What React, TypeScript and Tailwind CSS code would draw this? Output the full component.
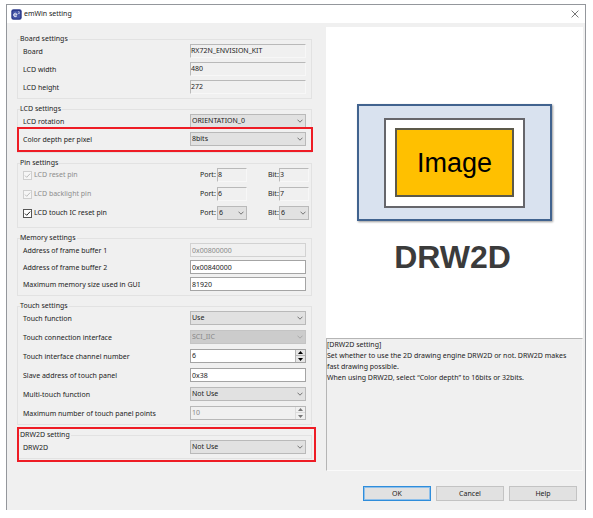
import { useId, type ReactNode } from "react";

function Chevron({ muted = false }: { muted?: boolean }) {
  return (
    <svg
      viewBox="0 0 6 4"
      className={`pointer-events-none absolute top-1/2 right-[3px] h-1 w-1.5 -translate-y-1/2 ${
        muted ? "text-[#a5a5a5]" : "text-[#666]"
      }`}
      fill="none"
      stroke="currentColor"
      strokeWidth="0.9"
      aria-hidden="true"
    >
      <path d="M0.5 0.7 3 3.2 5.5 0.7" />
    </svg>
  );
}

function Select({ id, value, disabled = false }: { id: string; value: string; disabled?: boolean }) {
  return (
    <div className="relative h-[14px] w-full">
      <select
        id={id}
        defaultValue={value}
        disabled={disabled}
        className="block h-[14px] w-full appearance-none border border-[#b9b9b9] bg-[#e1e1e1] pl-px leading-3 text-[#222] opacity-100 disabled:border-[#c4c4c4] disabled:bg-[#cccccc] disabled:text-[#888]"
      >
        <option>{value}</option>
      </select>
      <Chevron muted={disabled} />
    </div>
  );
}

function ReadOnly({ id, value }: { id: string; value: string }) {
  return (
    <input
      id={id}
      readOnly
      defaultValue={value}
      className="block h-[14px] w-full border border-t-[#b9b9b9] border-r-[#f7f7f7] border-b-[#f7f7f7] border-l-[#b9b9b9] bg-[#f0f0f0] pb-0.5 leading-3 outline-none"
    />
  );
}

function TextBox({ id, value, disabled = false }: { id: string; value: string; disabled?: boolean }) {
  return (
    <input
      id={id}
      defaultValue={value}
      disabled={disabled}
      className="block h-[14px] w-full border border-[#a4a4a4] bg-white pl-px leading-3 outline-none disabled:border-[#d2d2d2] disabled:bg-[#f0f0f0] disabled:text-[#888]"
    />
  );
}

function Spinner({ id, value, disabled = false }: { id: string; value: string; disabled?: boolean }) {
  const tone = disabled ? "bg-[#f0f0f0] text-[#777]" : "bg-[#e6e6e6] text-black";
  return (
    <div
      className={`flex h-[14px] w-full border ${
        disabled ? "border-[#b8b8b8] bg-[#f0f0f0]" : "border-[#a4a4a4] bg-white"
      }`}
    >
      <input
        id={id}
        defaultValue={value}
        disabled={disabled}
        inputMode="numeric"
        className="h-3 min-w-0 flex-1 bg-transparent pl-px leading-3 outline-none disabled:text-[#888]"
      />
      <div
        className={`flex w-2.5 flex-col divide-y border-l ${
          disabled ? "divide-[#dcdcdc] border-[#dcdcdc]" : "divide-[#b5b5b5] border-[#b5b5b5]"
        }`}
      >
        <button type="button" disabled={disabled} aria-label="Increase" className={`flex h-1.5 items-center justify-center ${tone}`}>
          <svg viewBox="0 0 5 3" className="h-[3px] w-[5px]" fill="currentColor">
            <path d="M0 3 2.5 0 5 3z" />
          </svg>
        </button>
        <button type="button" disabled={disabled} aria-label="Decrease" className={`flex h-1.5 items-center justify-center ${tone}`}>
          <svg viewBox="0 0 5 3" className="h-[3px] w-[5px]" fill="currentColor">
            <path d="M0 0 2.5 3 5 0z" />
          </svg>
        </button>
      </div>
    </div>
  );
}

type Kind = "readonly" | "select" | "text" | "spinner";

function Row({ label, kind, value, disabled }: { label: string; kind: Kind; value: string; disabled?: boolean }) {
  const id = useId();
  return (
    <div className="grid h-[14px] grid-cols-[1fr_116px] items-center">
      <label htmlFor={id} className="pt-px leading-3 whitespace-nowrap">
        {label}
      </label>
      {kind === "readonly" && <ReadOnly id={id} value={value} />}
      {kind === "select" && <Select id={id} value={value} disabled={disabled} />}
      {kind === "text" && <TextBox id={id} value={value} disabled={disabled} />}
      {kind === "spinner" && <Spinner id={id} value={value} disabled={disabled} />}
    </div>
  );
}

function PinRow({ label, port, bit, fixed = false }: { label: string; port: string; bit: string; fixed?: boolean }) {
  const id = useId();
  const Field = fixed ? ReadOnly : Select;
  return (
    <div className="grid h-[14px] grid-cols-[1fr_17px_30px_21px_11px_30px] items-center">
      <label className={`flex items-center gap-0.5 leading-3 whitespace-nowrap ${fixed ? "text-[#8d8d8d]" : ""}`}>
        <span className="relative size-[9px]">
          <input
            type="checkbox"
            defaultChecked
            disabled={fixed}
            className="block size-[9px] appearance-none border border-[#555] bg-white disabled:border-[#cfcfcf] disabled:bg-[#f6f6f6]"
          />
          <svg
            viewBox="0 0 9 9"
            className={`pointer-events-none absolute inset-0 size-[9px] ${fixed ? "text-[#bdbdbd]" : "text-[#222]"}`}
            fill="none"
            stroke="currentColor"
            strokeWidth="1"
          >
            <path d="M2 4.6 3.7 6.3 7.2 2.6" />
          </svg>
        </span>
        {label}
      </label>
      <label htmlFor={`${id}p`} className="leading-3">Port:</label>
      <Field id={`${id}p`} value={port} />
      <span />
      <label htmlFor={`${id}b`} className="leading-3">Bit:</label>
      <Field id={`${id}b`} value={bit} />
    </div>
  );
}

function Group({ title, className, children }: { title: string; className: string; children: ReactNode }) {
  return (
    <fieldset className={`relative min-w-0 border border-[#e2e2e2] pt-px pl-[5px] ${className}`}>
      <legend className="-ml-[3px] pr-px leading-[8px]">{title}</legend>
      {children}
    </fieldset>
  );
}

function AppIcon() {
  return (
    <svg viewBox="0 0 11 11" className="size-[11px]" aria-hidden="true">
      <rect x="0.3" y="0.3" width="10.4" height="10.4" rx="2.2" fill="#2c3a8c" />
      <rect x="1.6" y="2" width="7.6" height="7.4" rx="1.5" fill="#4656a8" />
      <path d="M2.8 5.9h3.1c0-2.2-3.2-2.2-3.2 0 0 2.1 2.2 2.1 3.1 1.2" fill="none" stroke="#fff" strokeWidth="0.9" />
      <path d="M7.2 2.9c.5-.7 1.5-.3 1.1.5L7.3 4.5h1.4" fill="none" stroke="#fff" strokeWidth="0.6" />
    </svg>
  );
}

export default function App() {
  return (
    <div className="min-h-screen bg-white pt-1 pr-[7px] pb-2 pl-1.5 font-['Noto_Sans','Open_Sans',sans-serif] text-[7px] text-[#222]">
      <main className="border border-b-0 border-[#94979c] bg-[#f0f0f0]">
        <header className="flex h-[18px] items-center bg-white pr-1.5 pl-1">
          <AppIcon />
          <h1 className="ml-[2px] flex-1 leading-3">emWin setting</h1>
          <button type="button" aria-label="Close" className="flex size-2 items-center justify-center">
            <svg viewBox="0 0 8 8" className="size-2" stroke="#666" strokeWidth="0.9">
              <path d="M0.6 0.6 7.4 7.4M7.4 0.6 0.6 7.4" />
            </svg>
          </button>
        </header>

        <div className="grid grid-cols-[295fr_257fr] gap-x-3.5 pt-1 pr-0.5 pl-2.5">
          <form className="flex flex-col gap-1.5 pt-2 pb-3">
            <Group title="Board settings" className="pr-[5px] pb-1">
              <div className="flex flex-col gap-1">
                <Row label="Board" kind="readonly" value="RX72N_ENVISION_KIT" />
                <Row label="LCD width" kind="readonly" value="480" />
                <Row label="LCD height" kind="readonly" value="272" />
              </div>
            </Group>

            <Group title="LCD settings" className="pr-[5px] pb-1.5">
              <div className="flex flex-col gap-1">
                <Row label="LCD rotation" kind="select" value="ORIENTATION_0" />
                <div className="relative">
                  <Row label="Color depth per pixel" kind="select" value="8bits" />
                  <div className="pointer-events-none absolute -top-[5px] -right-[7px] -bottom-1.5 -left-1.5 border-2 border-[#ee1c25]" />
                </div>
              </div>
            </Group>

            <Group title="Pin settings" className="pr-0.5 pb-[7px]">
              <div className="flex flex-col gap-[5px]">
                <PinRow label="LCD reset pin" port="8" bit="3" fixed />
                <PinRow label="LCD backlight pin" port="6" bit="7" fixed />
                <PinRow label="LCD touch IC reset pin" port="6" bit="6" />
              </div>
            </Group>

            <Group title="Memory settings" className="pr-[5px] pb-1">
              <div className="flex flex-col gap-[3px]">
                <Row label="Address of frame buffer 1" kind="text" value="0x00800000" disabled />
                <Row label="Address of frame buffer 2" kind="text" value="0x00840000" />
                <Row label="Maximum memory size used in GUI" kind="text" value="81920" />
              </div>
            </Group>

            <Group title="Touch settings" className="pr-[5px] pb-1">
              <div className="flex flex-col gap-[5px]">
                <Row label="Touch function" kind="select" value="Use" />
                <Row label="Touch connection interface" kind="select" value="SCI_IIC" disabled />
                <Row label="Touch interface channel number" kind="spinner" value="6" />
                <Row label="Slave address of touch panel" kind="text" value="0x38" />
                <Row label="Multi-touch function" kind="select" value="Not Use" />
                <Row label="Maximum number of touch panel points" kind="spinner" value="10" disabled />
              </div>
            </Group>

            <Group title="DRW2D setting" className="pr-[5px] pb-1">
              <Row label="DRW2D" kind="select" value="Not Use" />
              <div className="pointer-events-none absolute -top-3 -right-[5px] -bottom-1 -left-px border-2 border-[#ee1c25]" />
            </Group>
          </form>

          <aside className="flex flex-col">
            <div className="flex h-[311px] flex-col items-center bg-white pt-[77px]">
              <div className="flex h-[117px] w-[195px] items-center justify-center border-2 border-[#41638f] bg-[#d9e2ef] shadow-[1px_1px_2px_#0006]">
                <div className="flex h-[90px] w-[141px] items-center justify-center border-2 border-[#66666b] bg-white">
                  <div className="flex h-[69px] w-[119px] items-center justify-center border-2 border-[#5c594a] bg-[#ffc000] font-['Liberation_Sans',sans-serif] text-[27px] leading-8 text-black">
                    Image
                  </div>
                </div>
              </div>
              <div className="mt-4 pr-1 font-['Liberation_Sans',sans-serif] text-[32px] leading-10 font-bold text-[#3b3b3b]">
                DRW2D
              </div>
            </div>
            <div className="flex-1 border border-t-[#b5b5b5] border-r-[#f6f6f6] border-b-[#fafafa] border-l-[#b5b5b5] leading-[11px]">
              <p>[DRW2D setting]</p>
              <p>
                Set whether to use the 2D drawing engine DRW2D or not. DRW2D makes
                <br />
                fast drawing possible.
              </p>
              <p>When using DRW2D, select “Color depth” to 16bits or 32bits.</p>
            </div>
          </aside>
        </div>

        <footer className="flex justify-end gap-[5px] pt-[15px] pr-2 pb-[9px]">
          <button type="button" className="h-[15px] w-[68px] border border-[#2f8ddb] bg-[#e1e1e1] leading-3 ring-1 ring-[#8fc0ea] ring-inset">
            OK
          </button>
          <button type="button" className="h-[15px] w-[68px] border border-[#c3c3c3] bg-[#e1e1e1] leading-3">
            Cancel
          </button>
          <button type="button" className="h-[15px] w-[68px] border border-[#c3c3c3] bg-[#e1e1e1] leading-3">
            Help
          </button>
        </footer>
      </main>
    </div>
  );
}
